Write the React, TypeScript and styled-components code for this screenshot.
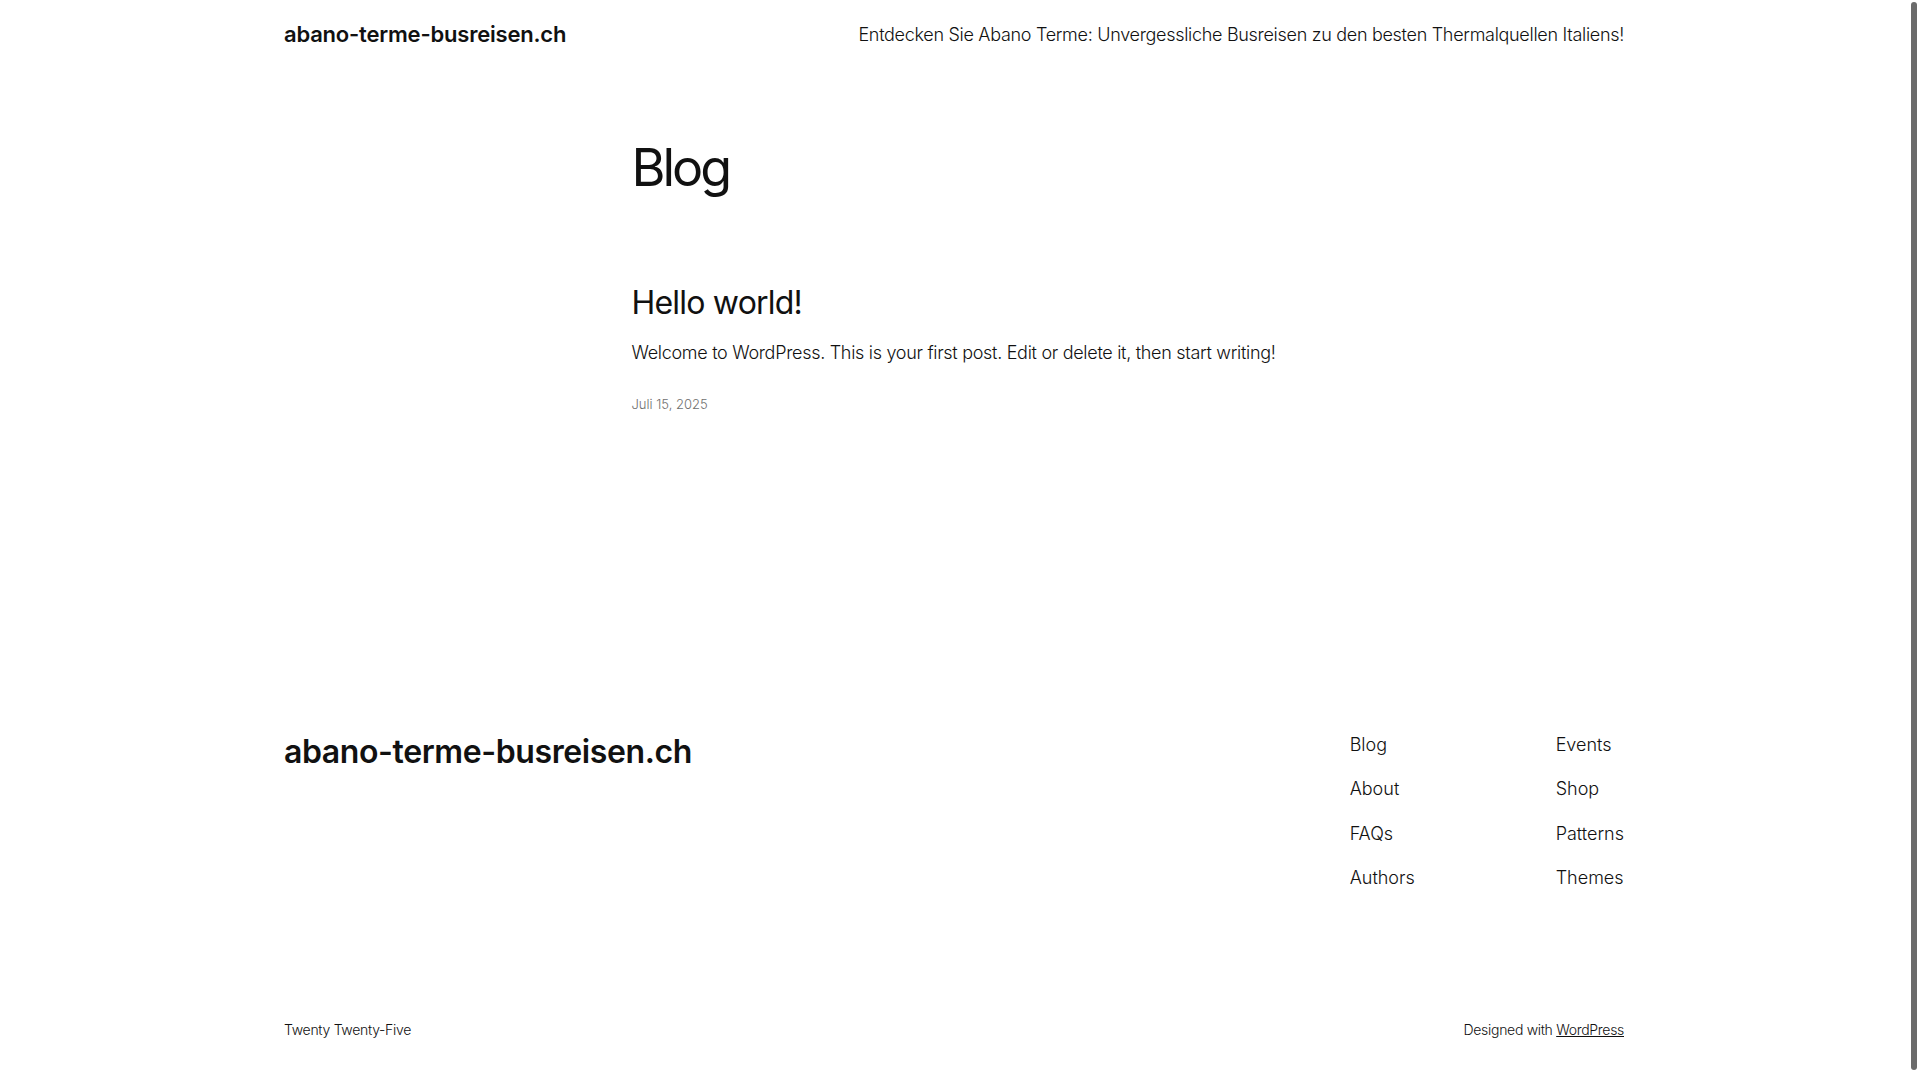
import React from "react";
import styled, { createGlobalStyle } from "styled-components";

const GlobalStyle = createGlobalStyle`
  html, body {
    margin: 0;
    padding: 0;
    background: #ffffff;
  }
  body {
    font-family: Inter, "Noto Sans", "Liberation Sans", sans-serif;
    color: #111111;
    -webkit-font-smoothing: antialiased;
    overflow: hidden;
  }
  a {
    color: inherit;
    text-decoration: none;
  }
`;

const App: React.FC = () => {
  return (
    <Page>
      <GlobalStyle />
      <Content>
        {/* Header */}
        <Header>
          <SiteTitle href="#">abano-terme-busreisen.ch</SiteTitle>
          <Tagline>
            Entdecken Sie Abano Terme: Unvergessliche Busreisen zu den besten
            Thermalquellen Italiens!
          </Tagline>
        </Header>

        {/* Main */}
        <Main>
          <PageTitle>Blog</PageTitle>
          <Post>
            <PostTitle href="#">Hello world!</PostTitle>
            <Excerpt>
              Welcome to WordPress. This is your first post. Edit or delete it,
              then start writing!
            </Excerpt>
            <PostDate>Juli 15, 2025</PostDate>
          </Post>
        </Main>

        {/* Footer */}
        <Footer>
          <FooterTop>
            <FooterTitle href="#">abano-terme-busreisen.ch</FooterTitle>
            <FooterNav>
              <NavColumn>
                <NavLink href="#">Blog</NavLink>
                <NavLink href="#">About</NavLink>
                <NavLink href="#">FAQs</NavLink>
                <NavLink href="#">Authors</NavLink>
              </NavColumn>
              <NavColumn>
                <NavLink href="#">Events</NavLink>
                <NavLink href="#">Shop</NavLink>
                <NavLink href="#">Patterns</NavLink>
                <NavLink href="#">Themes</NavLink>
              </NavColumn>
            </FooterNav>
          </FooterTop>
          <FooterBottom>
            <SmallText>Twenty Twenty-Five</SmallText>
            <SmallText>
              Designed with <Underlined href="#">WordPress</Underlined>
            </SmallText>
          </FooterBottom>
        </Footer>
      </Content>

      {/* Browser scrollbar */}
      <ScrollTrack>
        <ScrollThumb />
      </ScrollTrack>
    </Page>
  );
};

export default App;

// Styled Components
const Page = styled.div`
  height: 1080px;
  display: flex;
  overflow: hidden;
`;

const Content = styled.div`
  flex: 1;
  display: flex;
  flex-direction: column;
`;

const ScrollTrack = styled.div`
  width: 12px;
  display: flex;
  justify-content: center;
  padding: 2px 0 10px;
  box-sizing: border-box;
  background: #ffffff;
`;

const ScrollThumb = styled.div`
  width: 6px;
  height: 100%;
  border-radius: 3px;
  background: #6b6b6b;
`;

const Wide = styled.div`
  width: 1340px;
  margin: 0 auto;
`;

const Header = styled(Wide)`
  height: 68px;
  display: flex;
  justify-content: space-between;
  align-items: center;
`;

const SiteTitle = styled.a`
  font-size: 22px;
  font-weight: 600;
  letter-spacing: -0.2px;
`;

const Tagline = styled.p`
  margin: 0;
  font-size: 18px;
  font-weight: 300;
  letter-spacing: -0.3px;
`;

const Main = styled.main`
  width: 645px;
  margin: 0 auto;
  padding-top: 69px;
`;

const PageTitle = styled.h1`
  margin: 0;
  font-size: 52px;
  font-weight: 400;
  line-height: 1.2;
  letter-spacing: -3px;
`;

const Post = styled.article`
  padding-top: 85px;
  display: flex;
  flex-direction: column;
`;

const PostTitle = styled.a`
  font-size: 32px;
  font-weight: 400;
  line-height: 1.2;
  letter-spacing: -0.8px;
`;

const Excerpt = styled.p`
  margin: 16px 0 0;
  font-size: 18px;
  font-weight: 300;
  line-height: 1.5;
  letter-spacing: -0.3px;
  white-space: nowrap;
`;

const PostDate = styled.div`
  margin-top: 30px;
  font-size: 13px;
  font-weight: 300;
  color: #6f6f6f;
`;

const Footer = styled.footer`
  margin-top: auto;
`;

const FooterTop = styled(Wide)`
  display: flex;
  justify-content: space-between;
  align-items: flex-start;
`;

const FooterTitle = styled.a`
  font-size: 32px;
  font-weight: 600;
  letter-spacing: -0.4px;
  line-height: 1.3;
`;

const FooterNav = styled.nav`
  display: grid;
  grid-template-columns: 206px auto;
`;

const NavColumn = styled.div`
  display: flex;
  flex-direction: column;
  gap: 17.5px;
`;

const NavLink = styled.a`
  font-size: 18px;
  font-weight: 300;
  line-height: 1.5;
`;

const FooterBottom = styled(Wide)`
  display: flex;
  justify-content: space-between;
  align-items: center;
  padding: 130px 0 42px;
`;

const SmallText = styled.p`
  margin: 0;
  font-size: 14px;
  font-weight: 300;
  letter-spacing: -0.3px;
`;

const Underlined = styled.a`
  text-decoration: underline;
`;
